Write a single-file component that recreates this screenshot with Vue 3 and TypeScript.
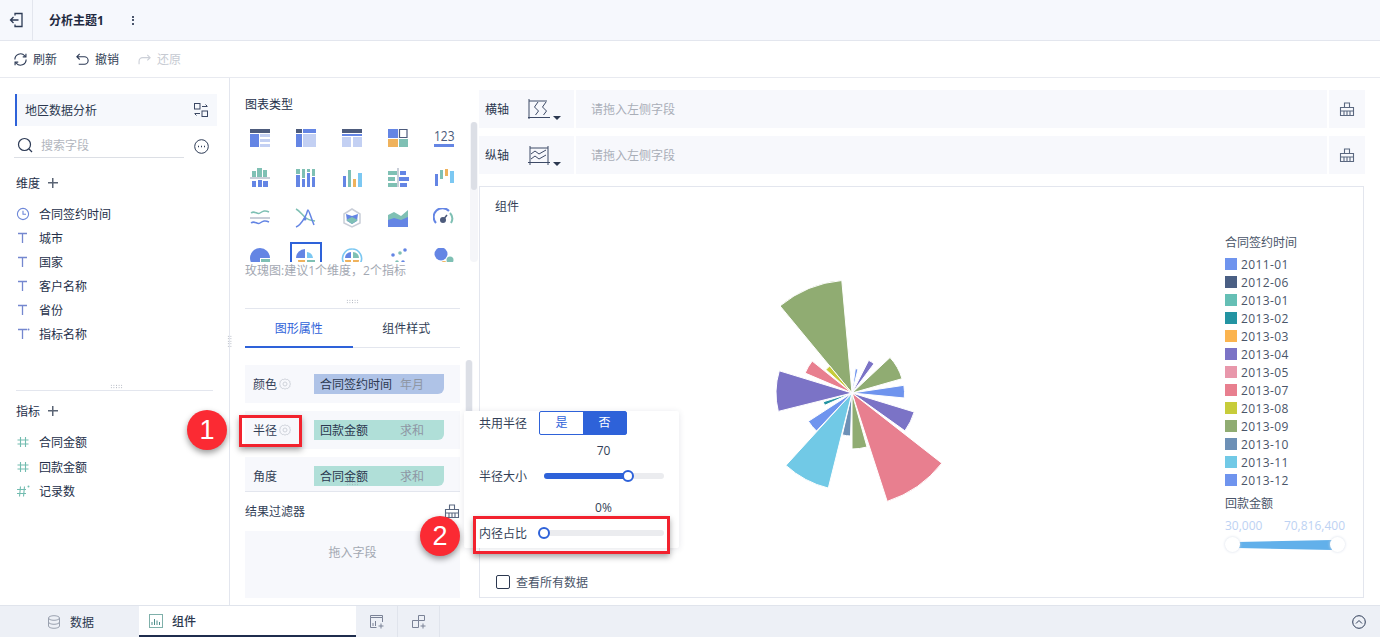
<template>
  <div class="page">
    <header class="topbar">
      <div class="back">
        <svg width="16" height="16" viewBox="0 0 16 16" fill="none" stroke="#2c3a55" stroke-width="1.300">
          <path d="M7 3.500V1.500h7v13H7v-2" />
          <path d="M10.500 8H2.500M5.500 5L2.500 8l3 3" />
        </svg>
      </div>
      <div class="theme-title">分析主题1</div>
      <div class="kebab"><i></i><i></i><i></i></div>
    </header>

    <div class="toolbar">
      <div class="tool">
        <svg width="15" height="15" viewBox="0 0 16 16" fill="none" stroke="#2c3a55" stroke-width="1.200">
          <path d="M2 8a6 6 0 0 1 10.500-4l1 1M14 8a6 6 0 0 1-10.500 4l-1-1" />
          <path d="M13.800 1.800v3.400h-3.400M2.200 14.200v-3.400h3.400" />
        </svg>
        刷新
      </div>
      <div class="tool">
        <svg width="15" height="15" viewBox="0 0 16 16" fill="none" stroke="#2c3a55" stroke-width="1.200">
          <path d="M5 2L2 5l3 3M2 5h8a3.800 3.800 0 0 1 0 8H4" />
        </svg>
        撤销
      </div>
      <div class="tool disabled">
        <svg width="15" height="15" viewBox="0 0 16 16" fill="none" stroke="#ccd0d8" stroke-width="1.200">
          <path d="M11 3l3 3-3 3M14 6H6a3.800 3.800 0 0 0-3.800 3.800V13" />
        </svg>
        还原
      </div>
    </div>

    <div class="main">
      <aside class="fields">
        <div class="dataset">
          <span>地区数据分析</span>
          <svg width="14" height="14" viewBox="0 0 14 14" fill="none" stroke="#3a4763" stroke-width="1">
            <rect x="0.500" y="0.500" width="5.500" height="5.500" />
            <rect x="8" y="8" width="5.500" height="5.500" />
            <path d="M8 3.500h5M11.500 1.500l2 2M6 10.500H1M2.500 12.500l-2-2" />
          </svg>
        </div>
        <div class="search-row">
          <div class="search">
            <svg width="16" height="16" viewBox="0 0 16 16" fill="none" stroke="#2c3a55" stroke-width="1.200">
              <circle cx="7.500" cy="7.500" r="6" />
              <path d="M12 12l3 3" />
            </svg>
            <span>搜索字段</span>
          </div>
          <svg width="15" height="15" viewBox="0 0 15 15" fill="none" stroke="#2c3a55" stroke-width="1">
            <circle cx="7.500" cy="7.500" r="6.800" />
            <path d="M4 7.500h1M7 7.500h1M10 7.500h1" stroke-width="1.500" />
          </svg>
        </div>
        <div class="group-head">维度<span class="plus"></span></div>
        <ul class="field-list dims">
          <li v-for="f in dimensions" :key="f.name">
            <svg v-if="f.kind === 'time'" class="ficon" width="14" height="14" viewBox="0 0 14 14" fill="none" stroke="#6d87d8" stroke-width="1.100">
              <circle cx="7" cy="7" r="5.600" />
              <path d="M7 3.800V7.200h3" />
            </svg>
            <svg v-else class="ficon" width="14" height="14" viewBox="0 0 14 14" fill="none" stroke="#7487cf" stroke-width="1.300">
              <path d="M2 2.500h9M6.500 2.500V12" />
              <circle v-if="f.kind === 'calc'" cx="12.500" cy="2.500" r="1" fill="#7487cf" stroke="none" />
            </svg>
            {{ f.name }}
          </li>
        </ul>
        <div class="dots fields-dots"></div>
        <div class="fields-sep"></div>
        <div class="group-head measures">指标<span class="plus"></span></div>
        <ul class="field-list">
          <li v-for="f in measures" :key="f.name">
            <svg class="ficon" width="14" height="14" viewBox="0 0 14 14" fill="none" stroke="#72bcb0" stroke-width="1.100">
              <path v-if="f.kind === 'num'" d="M4.500 2v10M9.500 2v10M1.500 5h11M1.500 9h11" />
              <path v-else d="M4.500 2.500l-1 10M8.500 2.500l-1 10M1 5.500h9M1 9.500h9" />
              <circle v-if="f.kind === 'calc'" cx="12.500" cy="2.500" r="1" fill="#72bcb0" stroke="none" />
            </svg>
            {{ f.name }}
          </li>
        </ul>
        <div class="dots side-dots"></div>
      </aside>

      <section class="config">
        <div class="config-title">图表类型</div>
        <div class="types-wrap">
          <div class="types">
            <div v-for="(icon, i) in chartIcons" :key="i" class="type" :class="{ on: i === 16 }">
              <svg width="22" height="20" viewBox="0 0 22 20" v-html="icon"></svg>
            </div>
          </div>
          <div class="scroll"><i></i></div>
        </div>
        <div class="hint">玫瑰图:建议1个维度，2个指标</div>
        <div class="dots config-dots"></div>
        <div class="tabs">
          <div class="tab active">图形属性</div>
          <div class="tab">组件样式</div>
        </div>
        <div class="props-wrap">
          <div class="props">
            <div v-for="p in props" :key="p.label" class="prop">
              <span class="prop-label">{{ p.label }}</span>
              <svg v-if="p.gear" class="gear" width="12" height="12" viewBox="0 0 12 12" fill="none" stroke="#cfd3db" stroke-width="1">
                <path d="M6 .8l1.300.8 1.500-.2.800 1.300 1.400.7-.2 1.500.7 1.100-.7 1.100.2 1.500-1.400.7-.8 1.300-1.500-.2L6 11.200l-1.300-.8-1.500.2-.8-1.300-1.400-.7.2-1.500L.5 6l.7-1.100-.2-1.500 1.400-.7.800-1.300 1.500.2z" />
                <circle cx="6" cy="6" r="2" />
              </svg>
              <div class="pill" :class="p.tone">
                <span>{{ p.field }}</span>
                <em>{{ p.agg }}</em>
              </div>
            </div>
          </div>
          <div class="scroll props-scroll"><i></i></div>
          <div class="dots props-dots"></div>
        </div>
        <div class="filter-head">
          结果过滤器
          <svg width="16" height="16" viewBox="0 0 16 16" fill="none" stroke="#5b6880" stroke-width="1.100" v-html="broom"></svg>
        </div>
        <div class="dropbox">拖入字段</div>
      </section>

      <section class="stage">
        <div class="axis">
          <div class="axis-label">
            <span>横轴</span>
            <svg width="22" height="20" viewBox="0 0 22 20" fill="none" stroke="#3d4a66" stroke-width="1">
              <path d="M1 0v20M0 18.500h22M1 2h18" />
              <path d="M10 3L6.500 8l4 4-3 4M18 3l-3.500 5 4 4-3 4" />
            </svg>
            <i class="caret"></i>
          </div>
          <div class="axis-drop">请拖入左侧字段</div>
          <div class="axis-btn">
            <svg width="16" height="16" viewBox="0 0 16 16" fill="none" stroke="#5b6880" stroke-width="1.100" v-html="broom"></svg>
          </div>
        </div>
        <div class="axis">
          <div class="axis-label">
            <span>纵轴</span>
            <svg width="22" height="20" viewBox="0 0 22 20" fill="none" stroke="#3d4a66" stroke-width="1">
              <path d="M2 1v19M0 17.500h22M20 1v19M2 3h18" />
              <path d="M3 9l4-3 4 3 7-4M3 14l4-3 4 3 7-4" />
            </svg>
            <i class="caret"></i>
          </div>
          <div class="axis-drop">请拖入左侧字段</div>
          <div class="axis-btn">
            <svg width="16" height="16" viewBox="0 0 16 16" fill="none" stroke="#5b6880" stroke-width="1.100" v-html="broom"></svg>
          </div>
        </div>

        <div class="canvas">
          <div class="canvas-title">组件</div>
          <svg class="rose" width="240" height="260" viewBox="0 0 240 260">
            <path v-for="(d, i) in slices" :key="i" :d="d.path" :fill="d.color" stroke="#fff" stroke-width="1" />
          </svg>
          <div class="legend">
            <div class="legend-title">合同签约时间</div>
            <div v-for="item in legend" :key="item.label" class="legend-item">
              <i :style="{ background: item.color }"></i>{{ item.label }}
            </div>
            <div class="legend-title size-title">回款金额</div>
            <div class="range-labels"><span>30,000</span><span>70,816,400</span></div>
            <div class="range">
              <i class="handle"></i>
              <svg width="96" height="10" viewBox="0 0 96 10" preserveAspectRatio="none"><path d="M0 2L96 0V10L0 8z" fill="#62b0ea" /></svg>
              <i class="handle"></i>
            </div>
          </div>
          <label class="all-data"><i></i>查看所有数据</label>
        </div>
      </section>
    </div>

    <footer class="bottom">
      <div class="btab">
        <svg width="14" height="14" viewBox="0 0 14 14" fill="none" stroke="#9aa1af" stroke-width="1">
          <ellipse cx="7" cy="3" rx="5.500" ry="2.300" />
          <path d="M1.500 3v8c0 1.300 2.500 2.300 5.500 2.300s5.500-1 5.500-2.300V3M1.500 7c0 1.300 2.500 2.300 5.500 2.300s5.500-1 5.500-2.300" />
        </svg>
        数据
      </div>
      <div class="btab current">
        <svg width="14" height="14" viewBox="0 0 14 14" fill="none">
          <rect x="0.500" y="0.500" width="13" height="13" stroke="#7fb0aa" fill="#fff" />
          <path d="M3 11V8M5.500 11V5M8 11V6.500M10.500 11V8" stroke="#4d8d8a" />
        </svg>
        组件
      </div>
      <div class="badd">
        <svg width="16" height="16" viewBox="0 0 16 16" fill="none" stroke="#7a8296" stroke-width="1">
          <path d="M1.500 1.500h12v2h-12zM1.500 3.500v10h6M13.500 3.500V8M4 12V9M6.500 12V7M12 9.500v5M9.500 12h5" />
        </svg>
      </div>
      <div class="badd">
        <svg width="16" height="16" viewBox="0 0 16 16" fill="none" stroke="#7a8296" stroke-width="1">
          <path d="M1.500 6.500h6v7h-6zM7.500 1.500h6v5h-6zM12 9.500v5M9.500 12h5" />
        </svg>
      </div>
      <div class="collapse">
        <svg width="14" height="14" viewBox="0 0 14 14" fill="none" stroke="#2c3a55" stroke-width="1">
          <circle cx="7" cy="7" r="6.300" />
          <path d="M4 8.500L7 5.500l3 3" />
        </svg>
      </div>
    </footer>

    <div class="popover">
      <div class="pop-row">
        <span class="pop-label">共用半径</span>
        <div class="toggle"><span>是</span><span class="sel">否</span></div>
      </div>
      <div class="pop-value">70</div>
      <div class="pop-row slider-row">
        <span class="pop-label">半径大小</span>
        <div class="slider"><b :style="{ width: radiusFill + 'px' }"></b><i :style="{ left: radiusFill + 'px' }"></i></div>
      </div>
      <div class="pop-value second">0%</div>
      <div class="pop-row slider-row">
        <span class="pop-label">内径占比</span>
        <div class="slider"><b style="width: 0"></b><i style="left: 0"></i></div>
      </div>
    </div>

    <div class="mark box-one"></div>
    <div class="mark box-two"></div>
    <div class="badge badge-one">1</div>
    <div class="badge badge-two">2</div>
  </div>
</template>

<script setup lang="ts">
import { computed } from 'vue';

interface Field {
  name: string;
  kind: string;
}

const dimensions: Field[] = [
  { name: '合同签约时间', kind: 'time' },
  { name: '城市', kind: 'text' },
  { name: '国家', kind: 'text' },
  { name: '客户名称', kind: 'text' },
  { name: '省份', kind: 'text' },
  { name: '指标名称', kind: 'calc' },
];

const measures: Field[] = [
  { name: '合同金额', kind: 'num' },
  { name: '回款金额', kind: 'num' },
  { name: '记录数', kind: 'calc' },
];

const props = [
  { label: '颜色', gear: true, field: '合同签约时间', agg: '年月', tone: 'blue' },
  { label: '半径', gear: true, field: '回款金额', agg: '求和', tone: 'green' },
  { label: '角度', gear: false, field: '合同金额', agg: '求和', tone: 'green' },
];

const radiusFill = 84;

const broom = '<path d="M5.500 6.500V2h5v4.500M1.500 6.500h13v8h-13zM1.500 10h13M5 10.500v4M8 10.500v4M11 10.500v4"/>';

const legend = [
  { label: '2011-01', color: '#6f94ee' },
  { label: '2012-06', color: '#4a5f84' },
  { label: '2013-01', color: '#65bfb5' },
  { label: '2013-02', color: '#2394a2' },
  { label: '2013-03', color: '#fbb44f' },
  { label: '2013-04', color: '#7b73c6' },
  { label: '2013-05', color: '#e897ab' },
  { label: '2013-07', color: '#e87f8f' },
  { label: '2013-08', color: '#c7cc3a' },
  { label: '2013-09', color: '#90ac72' },
  { label: '2013-10', color: '#6d90b6' },
  { label: '2013-11', color: '#71c9e6' },
  { label: '2013-12', color: '#6f94ee' },
];

// angles clockwise from north, radius in px
const sectors = [
  { from: -39.6, to: -5.2, r: 113, color: '#90ac72' },
  { from: 7.8, to: 14.2, r: 24.5, color: '#6f94ee' },
  { from: 27, to: 36.9, r: 36.7, color: '#7b73c6' },
  { from: 47, to: 74, r: 52, color: '#90ac72' },
  { from: 81.6, to: 95.5, r: 52.5, color: '#6f94ee' },
  { from: 107, to: 125.6, r: 65, color: '#7b73c6' },
  { from: 128, to: 162, r: 114, color: '#e87f8f' },
  { from: 164.5, to: 180, r: 56, color: '#90ac72' },
  { from: 182, to: 193, r: 43, color: '#6d90b6' },
  { from: 194, to: 222.4, r: 98, color: '#71c9e6' },
  { from: 223, to: 237, r: 52, color: '#6f94ee' },
  { from: 245.7, to: 253, r: 30, color: '#2394a2' },
  { from: 256, to: 287, r: 76, color: '#7b73c6' },
  { from: 293, to: 308.7, r: 51, color: '#e87f8f' },
  { from: 311.7, to: 320.5, r: 35, color: '#c7cc3a' },
];

const CX = 120;
const CY = 130;

const point = (deg: number, r: number) => {
  const a = (deg * Math.PI) / 180;
  return `${(CX + r * Math.sin(a)).toFixed(1)} ${(CY - r * Math.cos(a)).toFixed(1)}`;
};

const slices = computed(() =>
  sectors.map((s) => ({
    color: s.color,
    path: `M${CX} ${CY}L${point(s.from, s.r)}A${s.r} ${s.r} 0 0 1 ${point(s.to, s.r)}Z`,
  })),
);

const B = '#6485e4';
const L = '#c3d0f3';
const D = '#4d5b7c';
const T = '#7fc0b4';
const O = '#efb25c';
const C = '#7cc8f2';
const G = '#c9ced8';

const r = (x: number, y: number, w: number, h: number, c: string) =>
  `<rect x="${x}" y="${y}" width="${w}" height="${h}" fill="${c}"/>`;
const p = (d: string, c: string, w = 1.5) => `<path d="${d}" fill="none" stroke="${c}" stroke-width="${w}"/>`;
const f = (d: string, c: string) => `<path d="${d}" fill="${c}"/>`;
const dot = (x: number, y: number, rad: number, c: string) => `<circle cx="${x}" cy="${y}" r="${rad}" fill="${c}"/>`;

const chartIcons: string[] = [
  r(1, 1, 20, 4, D) + r(1, 6, 9, 13, B) + r(11, 6, 10, 3, L) + r(11, 11, 10, 3, L) + r(11, 16, 10, 3, L),
  r(1, 1, 6, 4, D) + r(8, 1, 13, 4, B) + r(1, 6, 6, 13, B) + r(8, 6, 13, 13, L),
  r(1, 1, 20, 4, D) + r(1, 6, 20, 2, B) + r(1, 9, 9, 10, L) + r(12, 9, 9, 10, L),
  r(1, 1, 10, 9, B) + p('M12.500 1.500h7.500v8h-7.500z', D, 1.200) + r(1, 11, 10, 8, O) + r(12, 11, 9, 8, T),
  `<text transform="translate(1 13) scale(1 1.25)" font-size="12" font-family="Open Sans, sans-serif" fill="${D}">123</text>` + r(1, 16, 20, 3, B),
  r(8, 0, 5, 9, T) + r(3, 3, 4, 6, T) + r(14, 2, 4, 7, T) + r(1, 9, 20, 2, G) + r(3, 13, 4, 6, B) + r(9, 12, 4, 7, B) + r(14, 13, 5, 6, B),
  r(1, 1, 4, 5, T) + r(1, 7, 4, 12, B) + r(7, 1, 3, 9, T) + r(7, 11, 3, 8, B) + r(12, 1, 3, 3, T) + r(12, 5, 3, 14, B) + r(17, 1, 3, 7, T) + r(17, 9, 3, 10, B),
  r(2, 8, 3, 11, B) + r(7, 2, 3, 17, T) + r(12, 11, 3, 8, O) + r(17, 5, 4, 14, C),
  r(1, 3, 9, 4, T) + r(13, 3, 6, 4, B) + r(1, 9, 7, 4, T) + r(12, 9, 10, 4, B) + r(1, 15, 9, 4, T) + r(13, 15, 7, 4, B) + r(10, 0, 2, 19, G),
  r(2, 6, 3, 12, B) + r(7, 2, 3, 9, T) + r(12, 1, 3, 7, O) + r(17, 3, 4, 12, C),
  p('M2 5c4-3 6 2 9 0s5-3 9-1', T) + r(1, 9, 20, 2, G) + p('M2 15c4-3 6 2 9 0s5-3 9-1', B),
  p('M1 1c4 2 6 6 10 9s5 2 9 3', T) + p('M1 19c5-2 6-5 9-10s2-7 3-7 3 8 6 15', B) + dot(10, 11, 1.500, B),
  p('M11 1l8 5v9l-8 4-8-4V6z', G) + f('M5 6l6 2 6-2-1 7-5 3-5-3z', B) + f('M5 12l6-3 6 3-6 4z', T),
  f('M1 7l6-3 7 4 7-6v10H1z', T) + f('M1 12l6-2 7 2 7-3v10H1z', B),
  p('M3 15A8.500 8.500 0 0 1 16 3', B, 2) + p('M17 5a8.500 8.500 0 0 1 1 10', T, 2) + dot(10, 12, 3, D) + p('M10 12l4-5', D, 1.500),
  f('M21 10A10 10 0 1 0 11 20V10z', B) + r(12, 11, 9, 8, T),
  f('M10 1a9 9 0 0 0-9 9h9z', B) + f('M12 4a7 7 0 0 1 6 6h-6z', C) + f('M3 12h7v7a7 7 0 0 1-7-7z', O) + f('M12 12h8v3a7 7 0 0 1-4 4h-4z', T),
  p('M11 1a9.500 9.500 0 1 0 .1 0', C, 1.600) + f('M10 4a6 6 0 0 0-6 6h6z', B) + f('M12 4a6 6 0 0 1 6 6h-6z', T) + f('M4 12h6v6a6 6 0 0 1-6-6z', O) + f('M12 12h6a6 6 0 0 1-6 6z', O),
  dot(6, 7, 1.800, B) + dot(13, 5, 1.800, T) + dot(18, 2, 1.800, B) + dot(10, 14, 1.800, T) + dot(16, 14, 1.800, B),
  dot(8, 6, 6.500, B) + dot(17, 12, 3.500, T) + dot(11, 16, 3, O),
];
</script>

<style>
html,
body {
  margin: 0;
  background: #fff;
}
</style>

<style scoped>
.page {
  position: relative;
  width: 1380px;
  height: 637px;
  overflow: hidden;
  display: flex;
  flex-direction: column;
  font-family: "Open Sans", "Noto Sans CJK SC", sans-serif;
  font-size: 12px;
  color: #333f57;
  background: #fff;
}

.topbar {
  height: 40px;
  flex: none;
  display: flex;
  align-items: center;
  background: #f6f8fd;
  border-bottom: 1px solid #e3e6ee;
}

.back {
  width: 32px;
  height: 40px;
  display: flex;
  align-items: center;
  justify-content: center;
  border-right: 1px solid #e3e6ee;
}

.theme-title {
  margin-left: 16px;
  font-weight: 700;
  color: #1e2940;
}

.kebab {
  margin-left: 28px;
  display: flex;
  flex-direction: column;
  gap: 1.500px;
}

.kebab i {
  width: 2px;
  height: 2px;
  background: #4b566c;
}

.toolbar {
  height: 36px;
  flex: none;
  display: flex;
  align-items: center;
  gap: 18px;
  padding-left: 13px;
  border-bottom: 1px solid #e8eaf0;
}

.tool {
  display: flex;
  align-items: center;
  gap: 5px;
}

.tool.disabled {
  color: #c6cad2;
}

.main {
  flex: 1;
  min-height: 0;
  display: flex;
}

.fields {
  position: relative;
  width: 230px;
  flex: none;
  padding: 16px 12px 0 15px;
  box-sizing: border-box;
  border-right: 1px solid #e3e6ee;
}

.dataset {
  height: 32px;
  display: flex;
  align-items: center;
  justify-content: space-between;
  padding: 0 9px 0 8px;
  background: #f6f8fc;
  border-left: 2px solid #2e62d9;
  color: #2c3850;
}

.search-row {
  margin-top: 9px;
  display: flex;
  align-items: center;
  justify-content: space-between;
  padding-right: 8px;
}

.search {
  width: 170px;
  height: 23px;
  margin-left: -1px;
  display: flex;
  align-items: center;
  gap: 8px;
  padding: 0 0 2px 3px;
  box-sizing: border-box;
  border-bottom: 1px solid #dcdfe5;
  color: #b2b6be;
}

.group-head {
  margin-top: 16px;
  padding-left: 1px;
  height: 18px;
  display: flex;
  align-items: center;
  gap: 8px;
  color: #25304a;
}

.plus {
  position: relative;
  width: 10px;
  height: 10px;
  background: linear-gradient(#5a6474, #5a6474) center / 100% 1.500px no-repeat,
    linear-gradient(#5a6474, #5a6474) center / 1.500px 100% no-repeat;
}

.field-list {
  list-style: none;
  margin: 10px 0 0;
  padding: 0;
}

.field-list li {
  height: 24.500px;
  display: flex;
  align-items: center;
  gap: 9px;
  padding-left: 1px;
  color: #25304a;
}

.dims {
  height: 177px;
}

.dims li {
  height: 24px;
}

.ficon {
  flex: none;
}

.fields-dots {
  margin: 5px auto 0;
}

.fields-sep {
  height: 1px;
  width: 197px;
  margin: 1px 0 0 1px;
  background: #e3e6ee;
}

.measures {
  margin-top: 11px;
}

.dots {
  width: 13px;
  height: 5px;
  background-image: radial-gradient(circle, #9aa0ad 0.700px, transparent 0.800px);
  background-size: 2.600px 2.500px;
}

.side-dots {
  position: absolute;
  top: 257px;
  right: -3px;
  width: 5px;
  height: 13px;
}

.config {
  width: 249px;
  flex: none;
  padding: 18px 0 0 15px;
  box-sizing: border-box;
}

.config-title {
  height: 18px;
  line-height: 18px;
  color: #25304a;
}

.types-wrap {
  position: relative;
  height: 140px;
  margin-top: 8px;
  display: flex;
}

.types {
  width: 230px;
  height: 140px;
  overflow: hidden;
  display: grid;
  grid-template-columns: repeat(5, 46px);
  grid-auto-rows: 40px;
  margin-left: -1px;
  align-content: start;
}

.type {
  width: 32px;
  height: 32px;
  display: flex;
  align-items: center;
  justify-content: center;
  box-sizing: border-box;
}

.type.on {
  border: 2px solid #2e62d9;
}

.scroll {
  position: absolute;
  right: 1px;
  top: 0;
  width: 8px;
  height: 140px;
  border-radius: 4px;
  background: #f5f6f9;
}

.scroll i {
  display: block;
  width: 6px;
  height: 68px;
  margin-left: 1px;
  border-radius: 3px;
  background: #dcdfe6;
}

.hint {
  margin-top: 0;
  height: 18px;
  line-height: 18px;
  color: #a3a8b2;
  position: relative;
}

.config-dots {
  margin: 19px 0 0 101px;
}

.tabs {
  margin-top: 4px;
  width: 215px;
  height: 40px;
  box-sizing: border-box;
  display: flex;
  border-top: 1px solid #e3e6ee;
  border-bottom: 1px solid #e3e6ee;
}

.tab {
  flex: 1;
  display: flex;
  align-items: center;
  justify-content: center;
  color: #333f57;
}

.tab.active {
  color: #2e62d9;
  border-bottom: 2px solid #2e62d9;
  margin-bottom: -1px;
}

.props-wrap {
  position: relative;
  height: 144px;
  box-sizing: border-box;
  border-bottom: 1px solid #e3e6ee;
  width: 215px;
}

.props {
  height: 126px;
  padding-top: 17px;
  overflow: hidden;
  display: flex;
  flex-direction: column;
  gap: 8px;
}

.prop {
  position: relative;
  height: 38px;
  flex: none;
  display: flex;
  align-items: center;
  padding-left: 8px;
  background: #f7f8fc;
}

.prop-label {
  width: 27px;
  color: #333f57;
}

.gear {
  margin-left: -1px;
}

.pill {
  position: absolute;
  left: 69px;
  width: 130px;
  height: 20px;
  display: flex;
  align-items: center;
  justify-content: space-between;
  padding: 0 20px 0 6px;
  box-sizing: border-box;
  border-radius: 0 0 6px 0;
  color: #2c3850;
}

.pill.blue {
  background: #afc3e7;
}

.pill.green {
  background: #b0dfd8;
}

.pill em {
  font-style: normal;
  color: #8e96a4;
}

.props-scroll {
  right: -13px;
  top: 12px;
  height: 130px;
}

.props-dots {
  position: absolute;
  left: 101px;
  top: 133px;
}

.filter-head {
  margin-top: 9px;
  width: 215px;
  height: 20px;
  display: flex;
  align-items: center;
  justify-content: space-between;
  color: #333f57;
}

.dropbox {
  margin-top: 10px;
  width: 215px;
  height: 67px;
  padding-top: 12px;
  box-sizing: border-box;
  text-align: center;
  background: #f7f8fc;
  color: #a3a8b2;
}

.stage {
  flex: 1;
  min-width: 0;
  padding: 12px 15px 0 0;
  display: flex;
  flex-direction: column;
  gap: 8px;
}

.axis {
  height: 38px;
  flex: none;
  display: flex;
  gap: 2px;
}

.axis-label {
  position: relative;
  width: 95px;
  display: flex;
  align-items: center;
  gap: 19px;
  padding-left: 6px;
  box-sizing: border-box;
  background: #f7f8fc;
  color: #2c3850;
}

.caret {
  position: absolute;
  left: 74px;
  top: 26px;
  border: 4px solid transparent;
  border-top: 4px solid #2c3850;
  border-bottom: 0;
}

.axis-drop {
  flex: 1;
  display: flex;
  align-items: center;
  padding-left: 15px;
  background: #f7f8fc;
  color: #a9aeb8;
}

.axis-btn {
  width: 36px;
  display: flex;
  align-items: center;
  justify-content: center;
  background: #f7f8fc;
}

.canvas {
  position: relative;
  margin: 4px 1px 0 0;
  height: 412px;
  box-sizing: border-box;
  border: 1px solid #e3e6ee;
}

.canvas-title {
  position: absolute;
  left: 15px;
  top: 10px;
  color: #333f57;
}

.rose {
  position: absolute;
  left: 252px;
  top: 76px;
}

.legend {
  position: absolute;
  left: 745px;
  top: 47px;
  width: 125px;
  color: #4a5569;
}

.legend-title {
  height: 18px;
  line-height: 18px;
  margin-bottom: 3px;
}

.legend-item {
  height: 18px;
  display: flex;
  align-items: center;
  gap: 4px;
  letter-spacing: 0.4px;
}

.legend-item i {
  width: 12px;
  height: 12px;
}

.size-title {
  margin-top: 6px;
  margin-bottom: 0;
}

.range-labels {
  display: flex;
  justify-content: space-between;
  width: 120px;
  margin-top: 5px;
  color: #bdd2f3;
  height: 16px;
  line-height: 16px;
}

.range {
  display: flex;
  align-items: center;
  margin-top: 3px;
  width: 120px;
}

.range svg {
  flex: 1;
  margin: 0 -2px;
}

.handle {
  position: relative;
  z-index: 1;
  width: 15px;
  height: 15px;
  border-radius: 50%;
  background: #fff;
  box-shadow: 0 0 3px #d4dbe8;
}

.all-data {
  position: absolute;
  left: 16px;
  bottom: 6px;
  display: flex;
  align-items: center;
  gap: 6px;
  color: #4a5569;
}

.all-data i {
  width: 12px;
  height: 12px;
  border: 1px solid #2c3850;
  border-radius: 2px;
}

.bottom {
  height: 32px;
  flex: none;
  display: flex;
  background: #edf0f6;
  border-top: 1px solid #e0e4ec;
  box-sizing: border-box;
}

.btab {
  display: flex;
  align-items: center;
  gap: 9px;
  width: 139px;
  padding-left: 47px;
  box-sizing: border-box;
  color: #2c3850;
}

.btab.current {
  width: 217px;
  padding-left: 10px;
  background: #fff;
  border-bottom: 2px solid #1f2d4d;
  font-weight: 500;
}

.badd {
  width: 41px;
  display: flex;
  align-items: center;
  justify-content: center;
  border-right: 1px solid #e0e4ec;
}

.collapse {
  margin-left: auto;
  margin-right: 14px;
  display: flex;
  align-items: center;
}

.popover {
  position: absolute;
  left: 464px;
  top: 411px;
  width: 215px;
  height: 137px;
  padding-left: 15px;
  box-sizing: border-box;
  background: #fff;
  border-radius: 2px;
  box-shadow: 0 1px 6px rgba(40, 50, 80, 0.12);
  color: #333f57;
}

.pop-row {
  display: flex;
  align-items: center;
  height: 24px;
}

.pop-label {
  width: 60px;
  flex: none;
}

.toggle {
  display: flex;
  width: 88px;
  height: 24px;
  box-sizing: border-box;
  border: 1px solid #2e62d9;
  border-radius: 2px;
  color: #2e62d9;
}

.toggle span {
  flex: 1;
  text-align: center;
  line-height: 22px;
}

.toggle .sel {
  background: #2e62d9;
  color: #fff;
}

.pop-value {
  width: 184px;
  margin-top: 8px;
  height: 16px;
  line-height: 16px;
  text-align: center;
  padding-left: 65px;
  box-sizing: border-box;
}

.second {
  margin-top: 12px;
}

.slider-row {
  margin-top: 5px;
}

.slider {
  position: relative;
  margin-left: 5px;
  width: 120px;
  height: 6px;
  border-radius: 3px;
  background: #ebecef;
}

.slider b {
  position: absolute;
  left: 0;
  top: 0;
  height: 6px;
  border-radius: 3px;
  background: #2e62d9;
}

.slider i {
  position: absolute;
  top: -3px;
  width: 8px;
  height: 8px;
  margin-left: -6px;
  border: 2px solid #2e62d9;
  border-radius: 50%;
  background: #fff;
}

.mark {
  position: absolute;
  box-sizing: border-box;
  border: 3px solid #f2222e;
  box-shadow: 0 3px 6px rgba(0, 0, 0, 0.35);
}

.box-one {
  left: 239px;
  top: 415px;
  width: 63px;
  height: 32px;
}

.box-two {
  left: 473px;
  top: 516px;
  width: 197px;
  height: 38px;
}

.badge {
  position: absolute;
  width: 40px;
  height: 40px;
  border-radius: 50%;
  display: flex;
  align-items: center;
  justify-content: center;
  background: #fb2a33;
  color: #fff;
  font-family: "Liberation Sans", sans-serif;
  font-size: 27px;
  box-shadow: 0 3px 6px rgba(0, 0, 0, 0.4);
}

.badge-one {
  left: 187px;
  top: 410px;
}

.badge-two {
  left: 420px;
  top: 516px;
}
</style>
